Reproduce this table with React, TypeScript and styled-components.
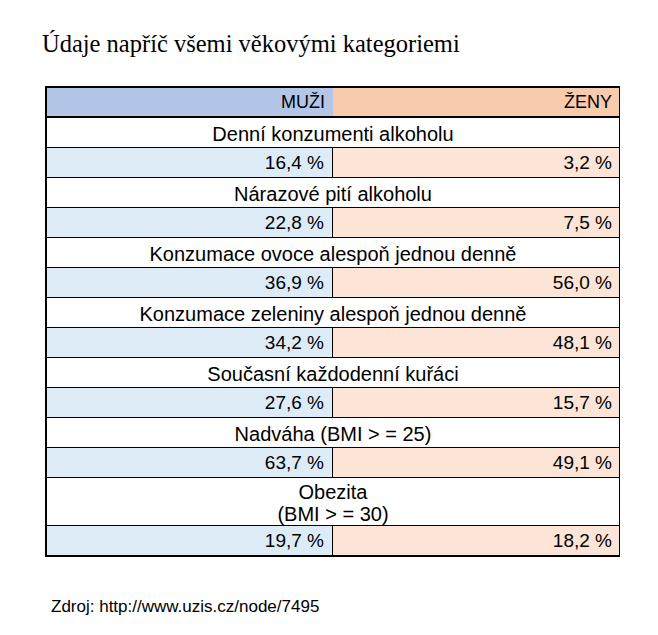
import styled, { createGlobalStyle } from "styled-components";

const GlobalStyle = createGlobalStyle`
  html, body {
    margin: 0;
    padding: 0;
    background: #ffffff;
  }
`;

const Page = styled.div`
  width: 658px;
  height: 635px;
  box-sizing: border-box;
  padding: 30px 0 0 42px;
  background: #fff;
  color: #000;
`;

const Title = styled.h1`
  margin: 0;
  font-family: "Liberation Serif", "Times New Roman", serif;
  font-weight: normal;
  font-size: 24.5px;
  line-height: 28px;
`;

const Table = styled.div`
  margin: 28px 0 0 3px;
  width: 575px;
  box-sizing: border-box;
  border-top: 2px solid #000;
  border-left: 2px solid #000;
  border-right: 1px solid #000;
  border-bottom: 2px solid #000;
  font-family: "Liberation Sans", Arial, sans-serif;
`;

const HeaderRow = styled.div`
  display: grid;
  grid-template-columns: 286px 1fr;
  height: 30px;
  box-sizing: border-box;
  border-bottom: 2px solid #000;
`;

const HeaderCell = styled.div<{ $side: "m" | "f" }>`
  background: ${(p) => (p.$side === "m" ? "#b4c6e7" : "#f8cbad")};
  display: flex;
  align-items: center;
  justify-content: flex-end;
  padding-right: ${(p) => (p.$side === "m" ? "8px" : "7px")};
  font-size: 18px;
`;

const LabelRow = styled.div<{ $tall?: boolean }>`
  height: ${(p) => (p.$tall ? "48px" : "30px")};
  box-sizing: border-box;
  border-bottom: 1px solid #000;
  display: flex;
  flex-direction: column;
  align-items: center;
  justify-content: center;
  padding-top: 3px;
  font-size: 20px;
  line-height: 22px;
  text-align: center;
`;

const ValueRow = styled.div`
  display: grid;
  grid-template-columns: 286px 1fr;
  height: 30px;
  box-sizing: border-box;
  border-bottom: 1px solid #000;

  &:last-child {
    height: 29px;
    border-bottom: none;
  }
`;

const ValueCell = styled.div<{ $side: "m" | "f" }>`
  background: ${(p) => (p.$side === "m" ? "#ddebf7" : "#fce4d6")};
  border-right: ${(p) => (p.$side === "m" ? "1px solid #000" : "none")};
  display: flex;
  align-items: center;
  justify-content: flex-end;
  padding-right: ${(p) => (p.$side === "m" ? "8px" : "7px")};
  padding-top: 1px;
  font-size: 19px;
`;

const Source = styled.p`
  margin: 40px 0 0 9px;
  font-family: "Liberation Sans", Arial, sans-serif;
  font-size: 17px;
  line-height: 20px;
`;

const rows = [
  { label: ["Denní konzumenti alkoholu"], m: "16,4 %", f: "3,2 %" },
  { label: ["Nárazové pití alkoholu"], m: "22,8 %", f: "7,5 %" },
  { label: ["Konzumace ovoce alespoň jednou denně"], m: "36,9 %", f: "56,0 %" },
  { label: ["Konzumace zeleniny alespoň jednou denně"], m: "34,2 %", f: "48,1 %" },
  { label: ["Současní každodenní kuřáci"], m: "27,6 %", f: "15,7 %" },
  { label: ["Nadváha (BMI > = 25)"], m: "63,7 %", f: "49,1 %" },
  { label: ["Obezita", "(BMI > = 30)"], m: "19,7 %", f: "18,2 %" },
];

export default function App() {
  return (
    <>
      <GlobalStyle />
      <Page>
        <Title>Údaje napříč všemi věkovými kategoriemi</Title>
        <Table>
          <HeaderRow>
            <HeaderCell $side="m">MUŽI</HeaderCell>
            <HeaderCell $side="f">ŽENY</HeaderCell>
          </HeaderRow>
          {rows.map((row) => [
            <LabelRow key={row.label[0]} $tall={row.label.length > 1}>
              {row.label.map((line) => (
                <span key={line}>{line}</span>
              ))}
            </LabelRow>,
            <ValueRow key={row.label[0] + "-v"}>
              <ValueCell $side="m">{row.m}</ValueCell>
              <ValueCell $side="f">{row.f}</ValueCell>
            </ValueRow>,
          ])}
        </Table>
        <Source>Zdroj: http://www.uzis.cz/node/7495</Source>
      </Page>
    </>
  );
}
